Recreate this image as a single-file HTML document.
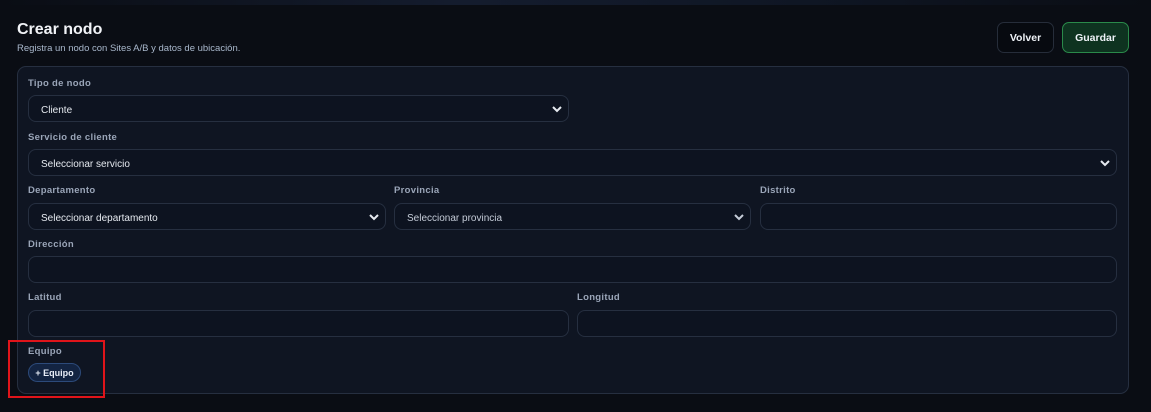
<!DOCTYPE html>
<html><head><style>
*{box-sizing:border-box;margin:0;padding:0}
body{width:1151px;height:412px;background:#0a0d14;font-family:"Liberation Sans",sans-serif;position:relative;overflow:hidden}
.top{position:absolute;left:0;top:0;width:1151px;height:5px;background:linear-gradient(90deg,#0a0d14,#141c2e 40%,#0f1624 70%,#0a0d14)}
h1{position:absolute;left:17px;top:21px;font-size:16px;font-weight:bold;color:#f1f3f7}
.sub{position:absolute;left:17px;top:43px;font-size:9.5px;color:#a9b8cc}
.btn{position:absolute;top:22px;height:31px;border-radius:7px;font-size:10.5px;font-weight:bold;color:#eef2f7;display:flex;align-items:center;justify-content:center}
.panel{position:absolute;left:17px;top:66px;width:1112px;height:328px;background:#0f1522;border:1px solid #262f40;border-radius:9px}
.lbl{position:absolute;font-size:9.5px;font-weight:bold;color:#9aa5b8;letter-spacing:0.3px}
.f{position:absolute;height:27px;border:1px solid #262f40;border-radius:8px;background:#0d1320;font-size:10px;color:#e6eaf0;padding-left:12px;padding-top:3px;display:flex;align-items:center}
.f svg{position:absolute;right:6px;top:9px}
.red{position:absolute;left:8px;top:340px;width:97px;height:58px;border:2px solid #e0141a}
.eq{position:absolute;left:28px;top:363px;width:53px;height:19px;border:1px solid #2c4a7a;border-radius:10px;background:#132442;color:#e8eef8;font-size:9px;font-weight:bold;display:flex;align-items:center;justify-content:center}
</style></head><body>
<div class="top"></div>
<h1>Crear nodo</h1>
<div class="sub">Registra un nodo con Sites A/B y datos de ubicación.</div>
<div class="btn" style="left:997px;width:57px;border:1px solid #262d3a;background:#070a10">Volver</div>
<div class="btn" style="left:1062px;width:67px;border:1px solid #2a8a4a;background:#0e3320">Guardar</div>
<div class="panel"></div>
<div class="lbl" style="left:28px;top:78px">Tipo de nodo</div>
<div class="f" style="left:28px;top:95px;width:541px">Cliente<svg width="10" height="8" viewBox="0 0 10 8"><path d="M1 2l4 4 4-4" stroke="#e6eaf0" stroke-width="2" fill="none"/></svg></div>
<div class="lbl" style="left:28px;top:132px">Servicio de cliente</div>
<div class="f" style="left:28px;top:149px;width:1089px">Seleccionar servicio<svg width="10" height="8" viewBox="0 0 10 8"><path d="M1 2l4 4 4-4" stroke="#e6eaf0" stroke-width="2" fill="none"/></svg></div>
<div class="lbl" style="left:28px;top:185px">Departamento</div>
<div class="lbl" style="left:394px;top:185px">Provincia</div>
<div class="lbl" style="left:760px;top:185px">Distrito</div>
<div class="f" style="left:28px;top:203px;width:358px">Seleccionar departamento<svg width="10" height="8" viewBox="0 0 10 8"><path d="M1 2l4 4 4-4" stroke="#e6eaf0" stroke-width="2" fill="none"/></svg></div>
<div class="f" style="left:394px;top:203px;width:357px;color:#c5ccd8">Seleccionar provincia<svg width="10" height="8" viewBox="0 0 10 8"><path d="M1 2l4 4 4-4" stroke="#c5ccd8" stroke-width="2" fill="none"/></svg></div>
<div class="f" style="left:760px;top:203px;width:357px"></div>
<div class="lbl" style="left:28px;top:239px">Dirección</div>
<div class="f" style="left:28px;top:256px;width:1089px"></div>
<div class="lbl" style="left:28px;top:292px">Latitud</div>
<div class="lbl" style="left:577px;top:292px">Longitud</div>
<div class="f" style="left:28px;top:310px;width:541px"></div>
<div class="f" style="left:577px;top:310px;width:540px"></div>
<div class="lbl" style="left:28px;top:346px">Equipo</div>
<div class="eq">+ Equipo</div>
<div class="red"></div>
</body></html>
